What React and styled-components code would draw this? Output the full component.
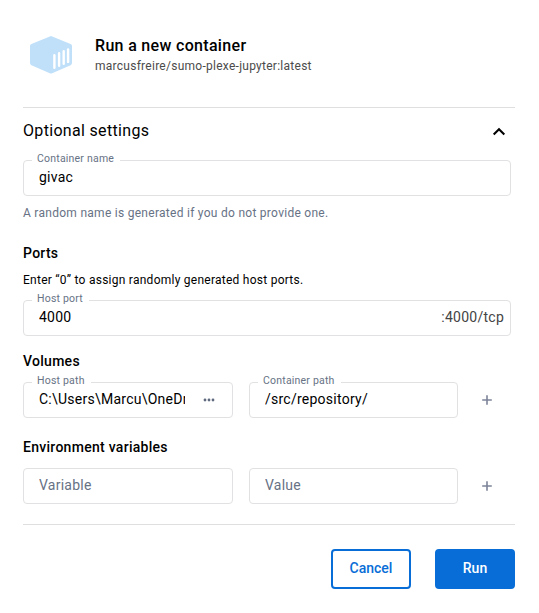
import React from 'react';
import styled, { createGlobalStyle } from 'styled-components';

const GlobalStyle = createGlobalStyle`
  *, *::before, *::after { box-sizing: border-box; }
  body {
    margin: 0;
    background: #fff;
    color: #000;
    font-family: Roboto, "Liberation Sans", sans-serif;
    letter-spacing: 0.02em;
  }
`;

const Dialog = styled.main`
  display: flex;
  flex-direction: column;
  width: 539px;
  height: 613px;
  padding: 0 24px 0 23px;
  overflow: hidden;
`;

const Header = styled.header`
  display: flex;
  align-items: flex-start;
  height: 108px;
  padding: 35px 0 0 6px;
  border-bottom: 1px solid #dfdfdf;
`;

const ImageIcon = styled.svg`
  flex: none;
  width: 44px;
  height: 40px;
`;

const Heading = styled.div`
  margin: 1px 0 0 22px;
`;

const Title = styled.h1`
  margin: 0;
  font-size: 16px;
  font-weight: 500;
  line-height: 20px;
  letter-spacing: 0.02em;
`;

const ImageName = styled.div`
  font-size: 12px;
  line-height: 20px;
  letter-spacing: 0.022em;
  color: #4b4b4b;
`;

const SettingsToggle = styled.button`
  display: flex;
  align-items: center;
  justify-content: space-between;
  height: 45px;
  padding: 0 7px 0 0;
  border: 0;
  background: none;
  color: inherit;
  font: 400 16px/20px Roboto, "Liberation Sans", sans-serif;
  letter-spacing: 0.02em;
`;

const Chevron = styled.svg`
  width: 18px;
  height: 18px;
  margin-top: 2px;
`;

const Section = styled.section`
  display: flex;
  flex-direction: column;
  margin-top: ${(p) => p.$gap}px;
`;

const SectionTitle = styled.h2`
  margin: 0;
  font-size: 14px;
  font-weight: 500;
  line-height: 20px;
  letter-spacing: 0.02em;
`;

const Hint = styled.p`
  margin: ${(p) => p.$top}px 0 0;
  font-size: 12px;
  line-height: 16px;
  letter-spacing: ${(p) => (p.$muted ? '0.023em' : '0.021em')};
  color: ${(p) => (p.$muted ? '#677285' : '#000')};
`;

const FieldRow = styled.div`
  display: grid;
  grid-template-columns: ${(p) => (p.$pair ? '210px 209px 26px' : '488px')};
  column-gap: 16px;
  margin-top: ${(p) => p.$top || 0}px;
`;

/* The fieldset's legend cuts the notch out of the outline. */
const Outline = styled.fieldset`
  display: flex;
  flex-direction: column;
  min-width: 0;
  height: ${(p) => (p.$labelled ? 43 : 36)}px;
  margin: 0;
  padding: 0 6px 0 8px;
  border: 1px solid #e1e1e3;
  border-radius: 4px;
`;

const Label = styled.legend`
  height: 15px;
  padding: 0 6px 0 5px;
  font-size: 10.5px;
  line-height: 11px;
  color: #677285;
  letter-spacing: 0.02em;
`;

const Control = styled.div`
  display: flex;
  align-items: center;
  height: ${(p) => (p.$labelled ? 18 : 32)}px;
  padding-left: 7px;
  font-size: 14px;
  line-height: 20px;
  letter-spacing: 0.25px;
`;

const Value = styled.span`
  flex: 1;
  min-width: 0;
  overflow: hidden;
  white-space: nowrap;
  color: ${(p) => (p.$placeholder ? '#677285' : '#000')};
`;

const Suffix = styled.span`
  color: #444;
`;

const BrowseIcon = styled.svg`
  flex: none;
  width: 14px;
  height: 14px;
  margin: 1px 10px 0 17px;
`;

const AddButton = styled.button`
  display: flex;
  align-items: center;
  justify-content: center;
  height: 36px;
  margin-top: ${(p) => (p.$labelled ? 7 : 0)}px;
  padding: 0;
  border: 0;
  background: none;
`;

const PlusIcon = styled.svg`
  width: 12px;
  height: 12px;
`;

const Footer = styled.footer`
  display: flex;
  justify-content: flex-end;
  gap: 24px;
  margin-top: 20px;
  padding-top: 24px;
  border-top: 1px solid #dfdfdf;
`;

const Action = styled.button`
  width: 80px;
  height: 40px;
  padding: 0 0 2px;
  border: 2px solid #086dd7;
  border-radius: 4px;
  background: ${(p) => (p.$primary ? '#086dd7' : '#fff')};
  color: ${(p) => (p.$primary ? '#fff' : '#086dd7')};
  font: 500 14px/20px Roboto, "Liberation Sans", sans-serif;
  letter-spacing: 0;
`;

function Field({ label, value, placeholder, suffix, browse }) {
  return (
    <Outline $labelled={!!label}>
      {label && <Label>{label}</Label>}
      <Control $labelled={!!label}>
        <Value $placeholder={!value}>{value || placeholder}</Value>
        {suffix && <Suffix>{suffix}</Suffix>}
        {browse && (
          <BrowseIcon viewBox="0 0 14 14" fill="#5f6a7e">
            <circle cx="3" cy="7" r="1.4" />
            <circle cx="7" cy="7" r="1.4" />
            <circle cx="11" cy="7" r="1.4" />
          </BrowseIcon>
        )}
      </Control>
    </Outline>
  );
}

function Add({ labelled }) {
  return (
    <AddButton $labelled={labelled} aria-label="Add">
      <PlusIcon viewBox="0 0 12 12" fill="none" stroke="#7d8499" strokeWidth="1.6">
        <path d="M6 1.200v9.600M1.200 6h9.600" />
      </PlusIcon>
    </AddButton>
  );
}

export default function App() {
  return (
    <>
      <GlobalStyle />
      <Dialog>
        <Header>
          <ImageIcon viewBox="0 0 44 40">
            <path
              d="M20.8 1.4Q22 .8 23.200 1.400L41.600 8.900Q43 9.500 43 11V28Q43 29.500 41.600 30.200L23.200 38.200Q22 38.700 20.800 38.200L2.400 30.200Q1 29.500 1 28V11Q1 9.500 2.400 8.900Z"
              fill="#c0e0fa"
            />
            <g stroke="#fff" strokeWidth="2.4" strokeLinecap="round">
              <path d="M25.400 20.200V32.700M30.100 18.200V30.800M34.700 16.200V28.800M39.100 14.400V26.900" />
            </g>
          </ImageIcon>
          <Heading>
            <Title>Run a new container</Title>
            <ImageName>marcusfreire/sumo-plexe-jupyter:latest</ImageName>
          </Heading>
        </Header>

        <SettingsToggle>
          Optional settings
          <Chevron viewBox="0 0 18 18" fill="none" stroke="#000" strokeWidth="2.1">
            <path d="M3.700 11.600 9 6.300l5.300 5.300" />
          </Chevron>
        </SettingsToggle>

        <FieldRow>
          <Field label="Container name" value="givac" />
        </FieldRow>
        <Hint $top={9} $muted>A random name is generated if you do not provide one.</Hint>

        <Section $gap={22}>
          <SectionTitle>Ports</SectionTitle>
          <Hint $top={9}>Enter “0” to assign randomly generated host ports.</Hint>
          <FieldRow $top={5}>
            <Field label="Host port" value="4000" suffix=":4000/tcp" />
          </FieldRow>
        </Section>

        <Section $gap={15}>
          <SectionTitle>Volumes</SectionTitle>
          <FieldRow $pair $top={4}>
            <Field label="Host path" value="C:\Users\Marcu\OneDrive" browse />
            <Field label="Container path" value="/src/repository/" />
            <Add labelled />
          </FieldRow>
        </Section>

        <Section $gap={19}>
          <SectionTitle>Environment variables</SectionTitle>
          <FieldRow $pair $top={11}>
            <Field placeholder="Variable" />
            <Field placeholder="Value" />
            <Add />
          </FieldRow>
        </Section>

        <Footer>
          <Action>Cancel</Action>
          <Action $primary>Run</Action>
        </Footer>
      </Dialog>
    </>
  );
}
